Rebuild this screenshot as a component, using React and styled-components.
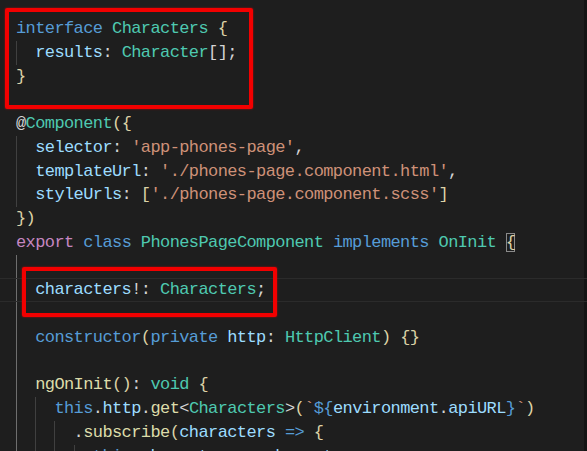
import React from "react";
import styled, { createGlobalStyle } from "styled-components";

const GlobalStyle = createGlobalStyle`
  html, body {
    margin: 0;
    padding: 0;
    background: #1e1e1e;
  }
`;

const CHAR = 9.6;
const STEP = CHAR * 2;

const colors = {
  kw: "#569cd6",
  ctl: "#c586c0",
  type: "#4ec9b0",
  prop: "#9cdcfe",
  str: "#ce9178",
  fn: "#dcdcaa",
  punc: "#d4d4d4",
  br: "#dcd2a6",
};

const Editor = styled.div`
  position: relative;
  width: 587px;
  height: 451px;
  overflow: hidden;
  box-sizing: border-box;
  padding-top: 17px;
  background: #1e1e1e;
  box-shadow: inset -3px 0 0 #141414;
  font-family: "Liberation Mono", "DejaVu Sans Mono", monospace;
  font-size: 17px;
  letter-spacing: -0.6px;
  color: #d4d4d4;
`;

const guideBg = ({ $guides, $active }) => {
  if (!$guides) return "";
  const layers = [];
  const sizes = [];
  if ($active) {
    layers.push("linear-gradient(#6e6e6e, #6e6e6e)");
    sizes.push("1px 100%");
  }
  layers.push(
    `repeating-linear-gradient(to right, #404040 0 1px, transparent 1px ${STEP}px)`
  );
  sizes.push(`${$guides * STEP}px 100%`);
  return `
    background-image: ${layers.join(", ")};
    background-size: ${sizes.join(", ")};
    background-position: ${layers.map(() => "16px 0").join(", ")};
    background-repeat: no-repeat;
  `;
};

const Line = styled.div`
  height: 23.75px;
  line-height: 23.75px;
  white-space: pre;
  padding-left: ${(p) => 16 + (p.$indent || 0) * CHAR}px;
  ${guideBg}
  ${(p) =>
    p.$current &&
    `box-shadow: inset 0 1px 0 #2b2b2b, inset 0 -1px 0 #2b2b2b;`}
`;

const Tok = styled.span`
  color: ${(p) => colors[p.$c] || colors.punc};
`;

const MatchBracket = styled.span`
  color: ${colors.br};
  box-shadow: inset 0 0 0 1px #8a8a8a;
`;

const Callout = styled.div`
  position: absolute;
  left: ${(p) => p.$x}px;
  top: ${(p) => p.$y}px;
  width: ${(p) => p.$w}px;
  height: ${(p) => p.$h}px;
  box-sizing: border-box;
  border: 4px solid #f20000;
  border-radius: 2px;
  box-shadow: 0 0 2px rgba(255, 0, 0, 0.7);
  pointer-events: none;
`;

const lines = [
  { t: [["kw", "interface"], ["punc", " "], ["type", "Characters"], ["punc", " "], ["br", "{"]] },
  { i: 2, g: 1, t: [["prop", "results"], ["punc", ": "], ["type", "Character"], ["punc", "[];"]] },
  { t: [["br", "}"]] },
  { t: [] },
  { t: [["punc", "@"], ["type", "Component"], ["br", "({"]] },
  { i: 2, g: 1, t: [["prop", "selector"], ["punc", ": "], ["str", "'app-phones-page'"], ["punc", ","]] },
  { i: 2, g: 1, t: [["prop", "templateUrl"], ["punc", ": "], ["str", "'./phones-page.component.html'"], ["punc", ","]] },
  { i: 2, g: 1, t: [["prop", "styleUrls"], ["punc", ": "], ["br", "["], ["str", "'./phones-page.component.scss'"], ["br", "]"]] },
  { t: [["br", "})"]] },
  {
    t: [
      ["ctl", "export"], ["punc", " "], ["kw", "class"], ["punc", " "],
      ["type", "PhonesPageComponent"], ["punc", " "], ["kw", "implements"],
      ["punc", " "], ["type", "OnInit"], ["punc", " "], ["match", "{"],
    ],
  },
  { g: 1, a: true, t: [] },
  { i: 2, g: 1, a: true, cur: true, t: [["prop", "characters"], ["punc", "!: "], ["type", "Characters"], ["punc", ";"]] },
  { g: 1, a: true, t: [] },
  {
    i: 2, g: 1, a: true,
    t: [
      ["kw", "constructor"], ["br", "("], ["kw", "private"], ["punc", " "],
      ["prop", "http"], ["punc", ": "], ["type", "HttpClient"], ["br", ")"],
      ["punc", " "], ["br", "{}"],
    ],
  },
  { g: 1, a: true, t: [] },
  { i: 2, g: 1, a: true, t: [["fn", "ngOnInit"], ["br", "()"], ["punc", ": "], ["type", "void"], ["punc", " "], ["br", "{"]] },
  {
    i: 4, g: 2, a: true,
    t: [
      ["kw", "this"], ["punc", "."], ["prop", "http"], ["punc", "."], ["fn", "get"],
      ["punc", "<"], ["type", "Characters"], ["punc", ">"], ["br", "("],
      ["str", "`"], ["kw", "${"], ["prop", "environment"], ["punc", "."],
      ["prop", "apiURL"], ["kw", "}"], ["str", "`"], ["br", ")"],
    ],
  },
  {
    i: 6, g: 3, a: true,
    t: [
      ["punc", "."], ["fn", "subscribe"], ["br", "("], ["prop", "characters"],
      ["punc", " "], ["kw", "=>"], ["punc", " "], ["br", "{"],
    ],
  },
  {
    i: 8, g: 4, a: true,
    t: [
      ["kw", "this"], ["punc", "."], ["prop", "characters"], ["punc", " = "],
      ["prop", "characters"], ["punc", ";"],
    ],
  },
];

export default function App() {
  return (
    <>
      <GlobalStyle />
      <Editor>
        {lines.map((line, n) => (
          <Line
            key={n}
            $indent={line.i}
            $guides={line.g}
            $active={line.a}
            $current={line.cur}
          >
            {line.t.map(([c, text], k) =>
              c === "match" ? (
                <MatchBracket key={k}>{text}</MatchBracket>
              ) : (
                <Tok key={k} $c={c}>
                  {text}
                </Tok>
              )
            )}
            {line.t.length === 0 ? " " : null}
          </Line>
        ))}
        <Callout $x={5} $y={8} $w={248} $h={101} />
        <Callout $x={22} $y={267} $w={255} $h={50} />
      </Editor>
    </>
  );
}
